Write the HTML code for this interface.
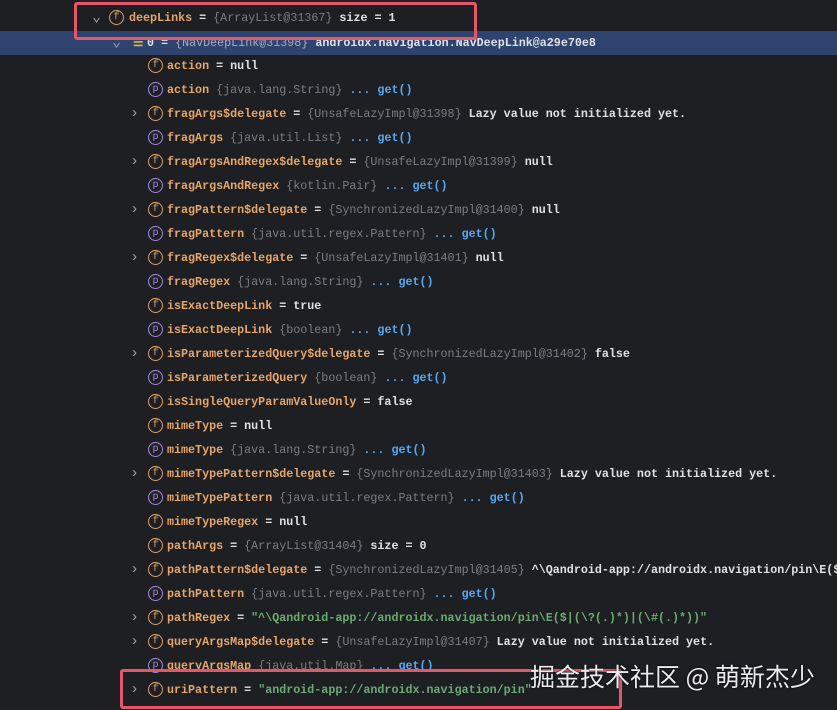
<!DOCTYPE html>
<html><head><meta charset="utf-8"><style>
body{margin:0;width:837px;height:710px;background:#1e1f22;overflow:hidden;position:relative;font-family:"Liberation Mono",monospace;font-size:11.7px;font-weight:bold;color:#dfe1e5}
#wrap{position:absolute;left:0;top:0;width:837px;height:710px;overflow:hidden}
.r{position:absolute;height:24px;line-height:24px;white-space:nowrap;left:0;width:837px;overflow:hidden}
.hl{background:#2e436e}
.ch{position:absolute;color:#9da0a8;font-weight:normal;font-size:15px}
.ic{position:absolute;top:4px;width:15px;height:15px;border-radius:50%;box-sizing:border-box;font-size:10px;line-height:13px;text-align:center;font-weight:normal}
.f{border:1.4px solid #d9a06b;color:#d9a06b}
.p{border:1.4px solid #a78be0;color:#a78be0}
.t{position:absolute}
.n{color:#e6a66b}
.g{color:#7a7e85;font-weight:normal}
.b{color:#56a8f5}
.s{color:#6aab73}
.box{position:absolute;border:3px solid #e5566a;border-radius:3px}
.wm{position:absolute;left:530px;top:658px;font-family:"Noto Sans CJK SC",sans-serif;font-size:25px;color:rgba(255,255,255,.92);font-weight:normal;text-shadow:0 0 2px #000;white-space:nowrap}
</style></head><body><div id="wrap">
<div class="r" style="top:6px"><span class="ch" style="left:92px">⌄</span><span class="ic f" style="left:109px">f</span><span class="t" style="left:129px"><span class="n">deepLinks</span> = <span class="g">{ArrayList@31367}</span>  size = 1</span></div>
<div class="r hl" style="top:31px"><span class="ch" style="left:112px">⌄</span><span class="t" style="left:133px;color:#d9b54a">☰</span><span class="t" style="left:147px">0 = <span class="g" style="color:#aab">{NavDeepLink@31398}</span> androidx.navigation.NavDeepLink@a29e70e8</span></div>
<div id="rows"></div>
<div class="box" style="left:74px;top:2px;width:397px;height:32px"></div>
<div class="box" style="left:120px;top:669px;width:496px;height:34px"></div>
<div class="wm">掘金技术社区 @ 萌新杰少</div>
</div>
<script>
var R=[
[0,'f','action',' = null'],
[0,'p','action',' <span class="g">{java.lang.String}</span> <span class="b">... get()</span>'],
[1,'f','fragArgs$delegate',' = <span class="g">{UnsafeLazyImpl@31398}</span> Lazy value not initialized yet.'],
[0,'p','fragArgs',' <span class="g">{java.util.List}</span> <span class="b">... get()</span>'],
[1,'f','fragArgsAndRegex$delegate',' = <span class="g">{UnsafeLazyImpl@31399}</span> null'],
[0,'p','fragArgsAndRegex',' <span class="g">{kotlin.Pair}</span> <span class="b">... get()</span>'],
[1,'f','fragPattern$delegate',' = <span class="g">{SynchronizedLazyImpl@31400}</span> null'],
[0,'p','fragPattern',' <span class="g">{java.util.regex.Pattern}</span> <span class="b">... get()</span>'],
[1,'f','fragRegex$delegate',' = <span class="g">{UnsafeLazyImpl@31401}</span> null'],
[0,'p','fragRegex',' <span class="g">{java.lang.String}</span> <span class="b">... get()</span>'],
[0,'f','isExactDeepLink',' = true'],
[0,'p','isExactDeepLink',' <span class="g">{boolean}</span> <span class="b">... get()</span>'],
[1,'f','isParameterizedQuery$delegate',' = <span class="g">{SynchronizedLazyImpl@31402}</span> false'],
[0,'p','isParameterizedQuery',' <span class="g">{boolean}</span> <span class="b">... get()</span>'],
[0,'f','isSingleQueryParamValueOnly',' = false'],
[0,'f','mimeType',' = null'],
[0,'p','mimeType',' <span class="g">{java.lang.String}</span> <span class="b">... get()</span>'],
[1,'f','mimeTypePattern$delegate',' = <span class="g">{SynchronizedLazyImpl@31403}</span> Lazy value not initialized yet.'],
[0,'p','mimeTypePattern',' <span class="g">{java.util.regex.Pattern}</span> <span class="b">... get()</span>'],
[0,'f','mimeTypeRegex',' = null'],
[0,'f','pathArgs',' = <span class="g">{ArrayList@31404}</span>  size = 0'],
[1,'f','pathPattern$delegate',' = <span class="g">{SynchronizedLazyImpl@31405}</span> ^\\Qandroid-app://androidx.navigation/pin\\E($'],
[0,'p','pathPattern',' <span class="g">{java.util.regex.Pattern}</span> <span class="b">... get()</span>'],
[1,'f','pathRegex',' = <span class="s">"^\\Qandroid-app://androidx.navigation/pin\\E($|(\\?(.)*)|(\\#(.)*))"</span>'],
[1,'f','queryArgsMap$delegate',' = <span class="g">{UnsafeLazyImpl@31407}</span> Lazy value not initialized yet.'],
[0,'p','queryArgsMap',' <span class="g">{java.util.Map}</span> <span class="b">... get()</span>'],
[1,'f','uriPattern',' = <span class="s">"android-app://androidx.navigation/pin"</span>']
];
var h='';
R.forEach(function(x,i){var top=54+i*24;
h+='<div class="r" style="top:'+top+'px">'+(x[0]?'<span class="ch" style="left:130px">›</span>':'')+
'<span class="ic '+x[1]+'" style="left:148px">'+x[1]+'</span><span class="t" style="left:167px"><span class="n">'+x[2]+'</span>'+x[3]+'</span></div>';});
document.getElementById('rows').innerHTML=h;
</script>
</body></html>
